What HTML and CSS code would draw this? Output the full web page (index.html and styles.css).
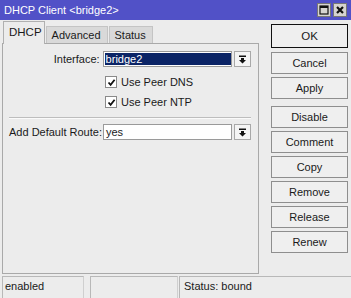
FILE: index.html
```html
<!DOCTYPE html>
<html lang="en">
<head>
  <meta charset="UTF-8" />
  <title>DHCP Client &lt;bridge2&gt;</title>
  <link rel="stylesheet" href="styles.css">
</head>
<body>
  <div class="titlebar">
    <span class="title">DHCP Client &lt;bridge2&gt;</span>
    <div class="winbtns">
      <span class="winbtn">
        <svg width="10" height="10" viewBox="0 0 10 10"><rect x="1" y="1" width="8" height="8" fill="none" stroke="#111" stroke-width="1.2"/><rect x="1" y="1" width="8" height="2" fill="#111"/></svg>
      </span>
      <span class="winbtn">
        <svg width="10" height="10" viewBox="0 0 10 10"><path d="M2 2 L8 8 M8 2 L2 8" stroke="#111" stroke-width="2.2"/></svg>
      </span>
    </div>
  </div>

  <div class="main">
    <div class="leftcol">
      <div class="tabs">
        <div class="tab active">DHCP</div>
        <div class="tab">Advanced</div>
        <div class="tab">Status</div>
      </div>
      <div class="panel">
        <div class="row first">
          <label class="lbl">Interface:</label>
          <div class="field selected"><span>bridge2</span></div>
          <div class="drop">
            <svg width="9" height="9" viewBox="0 0 9 9"><rect x="1" y="0.5" width="7" height="1.5" fill="#111"/><polygon points="3,3 6,3 6,5 8,5 4.5,8.5 1,5 3,5" fill="#111"/></svg>
          </div>
        </div>
        <div class="check first-check">
          <span class="box"><svg width="9" height="9" viewBox="0 0 9 9"><path d="M1.5 4.5 L3.6 6.8 L7.6 1.8" fill="none" stroke="#111" stroke-width="1.8"/></svg></span>
          <span>Use Peer DNS</span>
        </div>
        <div class="check">
          <span class="box"><svg width="9" height="9" viewBox="0 0 9 9"><path d="M1.5 4.5 L3.6 6.8 L7.6 1.8" fill="none" stroke="#111" stroke-width="1.8"/></svg></span>
          <span>Use Peer NTP</span>
        </div>
        <div class="sep"></div>
        <div class="row">
          <label class="lbl">Add Default Route:</label>
          <div class="field"><span>yes</span></div>
          <div class="drop">
            <svg width="9" height="9" viewBox="0 0 9 9"><rect x="1" y="0.5" width="7" height="1.5" fill="#111"/><polygon points="3,3 6,3 6,5 8,5 4.5,8.5 1,5 3,5" fill="#111"/></svg>
          </div>
        </div>
      </div>
    </div>

    <div class="buttons">
      <button class="btn ok">OK</button>
      <button class="btn">Cancel</button>
      <button class="btn">Apply</button>
      <button class="btn group">Disable</button>
      <button class="btn">Comment</button>
      <button class="btn">Copy</button>
      <button class="btn">Remove</button>
      <button class="btn">Release</button>
      <button class="btn">Renew</button>
    </div>
  </div>

  <div class="statusbar">
    <div class="cell c1">enabled</div>
    <div class="cell c2"></div>
    <div class="cell c3">Status: bound</div>
  </div>
</body>
</html>
```

FILE: styles.css
```css
body {
  margin: 0;
  width: 351px;
  height: 298px;
  overflow: hidden;
  background: #ececec;
  font-family: 'Liberation Sans', Arial, sans-serif;
  font-size: 11px;
  color: #1a1a1a;
}
.titlebar {
  height: 20px;
  display: flex;
  align-items: center;
  justify-content: space-between;
  padding: 0 4px 0 4px;
  background: #5151c7;
  color: #fff;
  font-size: 11px;
}
.winbtns {
  display: flex;
  gap: 2px;
}
.winbtn {
  width: 12px;
  height: 12px;
  background: #d6d4d0;
  border: 1px solid #777;
  display: flex;
  align-items: center;
  justify-content: center;
}
.main {
  display: flex;
  padding-left: 2px;
}
.leftcol {
  width: 257px;
}
.tabs {
  display: flex;
  align-items: flex-end;
  height: 21px;
  margin-top: 2px;
  padding-left: 1px;
}
.tab {
  height: 16px;
  line-height: 16px;
  padding: 0 6px 0 5px;
  background: #d9d9d9;
  border: 1px solid #c4c4c4;
  border-bottom: none;
  margin-left: 1px;
}
.tab.active {
  height: 21px;
  line-height: 21px;
  margin-left: 0;
  padding: 0 2px 0 5px;
  background: #ececec;
  border-color: #b0b0b0;
  font-size: 11.5px;
  position: relative;
  z-index: 1;
  margin-bottom: -1px;
  height: 22px;
}
.panel {
  height: 229px;
  border: 1px solid #a9a9a9;
  display: flex;
  flex-direction: column;
  padding: 0 7px 0 6px;
}
.row {
  display: flex;
  align-items: center;
  height: 16px;
}
.row.first {
  margin-top: 7px;
}
.lbl {
  width: 91px;
  text-align: right;
  margin-right: 3px;
  white-space: nowrap;
}
.row:last-child .lbl {
  text-align: left;
}
.field {
  width: 127px;
  height: 14px;
  border: 1px solid #9a9a9a;
  background: #fff;
  display: flex;
  align-items: center;
  padding-left: 1px;
  box-sizing: content-box;
}
.field span {
  padding-left: 1px;
}
.field.selected span {
  background: #0b2466;
  color: #fff;
  width: 125px;
  height: 12px;
  line-height: 12px;
}
.drop {
  width: 15px;
  height: 14px;
  margin-left: 2px;
  border: 1px solid #a8a8a8;
  background: #f4f4f4;
  display: flex;
  align-items: center;
  justify-content: center;
}
.check {
  display: flex;
  align-items: center;
  gap: 4px;
  height: 12px;
  margin-top: 8px;
  margin-left: 96px;
}
.check.first-check {
  margin-top: 9px;
}
.box {
  width: 10px;
  height: 10px;
  border: 1px solid #8a8a8a;
  background: #fff;
  display: flex;
  align-items: center;
  justify-content: center;
}
.sep {
  height: 0;
  border-top: 1px solid #bdbdbd;
  border-bottom: 1px solid #fafafa;
  margin-top: 9px;
  margin-bottom: 5px;
}
.buttons {
  width: 77px;
  margin-left: 12px;
  margin-top: 4px;
  display: flex;
  flex-direction: column;
  gap: 3px;
}
.btn {
  height: 22px;
  padding: 0;
  font-family: inherit;
  font-size: 11px;
  color: #1a1a1a;
  background: #efefef;
  border: 1px solid #8e8e8e;
  border-radius: 0;
}
.btn.ok {
  height: 24px;
  border-color: #111;
  font-size: 11.5px;
  margin-bottom: 1px;
}
.btn.group {
  margin-top: 4px;
}
.statusbar {
  display: flex;
  height: 22px;
  margin-top: 2px;
}
.cell {
  border-top: 1px solid #b8b8b8;
  border-left: 1px solid #b8b8b8;
  border-right: 1px solid #cfcfcf;
  padding: 3px 0 0 2px;
}
.c1 {
  margin-left: 2px;
  width: 78px;
}
.c2 {
  margin-left: 6px;
  width: 84px;
}
.c3 {
  margin-left: 1px;
  flex: 1;
  border-right: none;
  padding-left: 4px;
}
```
